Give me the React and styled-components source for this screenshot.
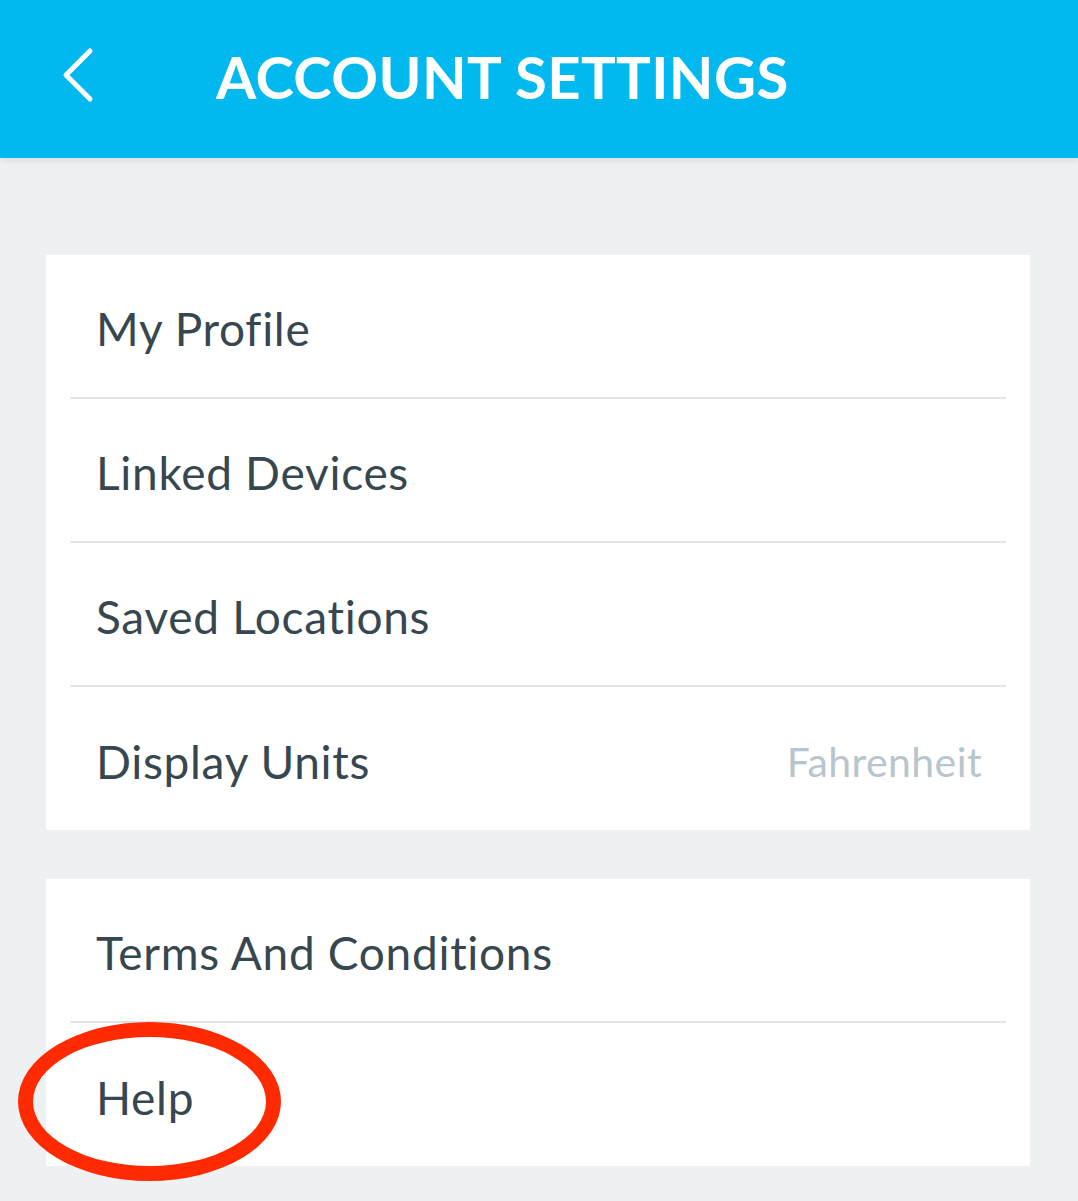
import styled, { createGlobalStyle } from "styled-components";

const GlobalStyle = createGlobalStyle`
  html, body {
    margin: 0;
    padding: 0;
    background: #eef1f2;
    font-family: Lato, "Open Sans", sans-serif;
  }
`;

const Page = styled.div`
  width: 1078px;
  min-height: 1201px;
  background: #eef1f2;
  position: relative;
  overflow: hidden;
`;

const Header = styled.div`
  height: 158px;
  background: #02b9ef;
  display: flex;
  align-items: center;
  box-shadow: 0 3px 6px rgba(0, 0, 0, 0.08);
  position: relative;
  z-index: 1;
`;

const BackButton = styled.button`
  width: 216px;
  height: 100%;
  padding: 0 0 6px 60px;
  border: none;
  background: transparent;
  display: flex;
  align-items: center;
  cursor: pointer;
`;

const Title = styled.h1`
  margin: 0 0 6px;
  color: #fff;
  font-family: Lato, sans-serif;
  font-weight: 700;
  font-size: 58px;
  letter-spacing: 0.4px;
`;

const Content = styled.div`
  padding: 97px 48px 0 46px;
  display: flex;
  flex-direction: column;
  gap: 49px;
`;

const Card = styled.div`
  background: #fff;
  display: flex;
  flex-direction: column;
`;

const Row = styled.div`
  height: ${(p) => (p.last ? 143 : 144)}px;
  box-sizing: border-box;
  margin: 0 24px;
  padding: 5px 24px 0 26px;
  display: flex;
  align-items: center;
  justify-content: space-between;
  border-bottom: ${(p) => (p.last ? "none" : "2px solid #e2e4e5")};
  position: relative;
`;

const Label = styled.span`
  color: #37474f;
  font-size: 46px;
  font-weight: 400;
  letter-spacing: 0.7px;
`;

const Value = styled.span`
  color: #b7c6cc;
  font-size: 41px;
  letter-spacing: 0.4px;
`;

const Annotation = styled.div`
  position: absolute;
  left: -52px;
  top: -1px;
  width: 233px;
  height: 129px;
  border: 15px solid #ff2a00;
  border-radius: 50%;
  pointer-events: none;
`;

const groups = [
  [
    { label: "My Profile" },
    { label: "Linked Devices" },
    { label: "Saved Locations" },
    { label: "Display Units", value: "Fahrenheit" },
  ],
  [{ label: "Terms And Conditions" }, { label: "Help", marked: true }],
];

export default function App() {
  return (
    <Page>
      <GlobalStyle />
      <Header>
        <BackButton aria-label="Back">
          <svg width="36" height="58" viewBox="0 0 36 58">
            <path
              d="M30 4 L6 28 L30 52"
              fill="none"
              stroke="#fff"
              strokeWidth="5"
              strokeLinecap="round"
              strokeLinejoin="round"
            />
          </svg>
        </BackButton>
        <Title>ACCOUNT SETTINGS</Title>
      </Header>
      <Content>
        {groups.map((items, gi) => (
          <Card key={gi}>
            {items.map((item, i) => (
              <Row key={item.label} last={i === items.length - 1}>
                <Label>{item.label}</Label>
                {item.value && <Value>{item.value}</Value>}
                {item.marked && <Annotation />}
              </Row>
            ))}
          </Card>
        ))}
      </Content>
    </Page>
  );
}
